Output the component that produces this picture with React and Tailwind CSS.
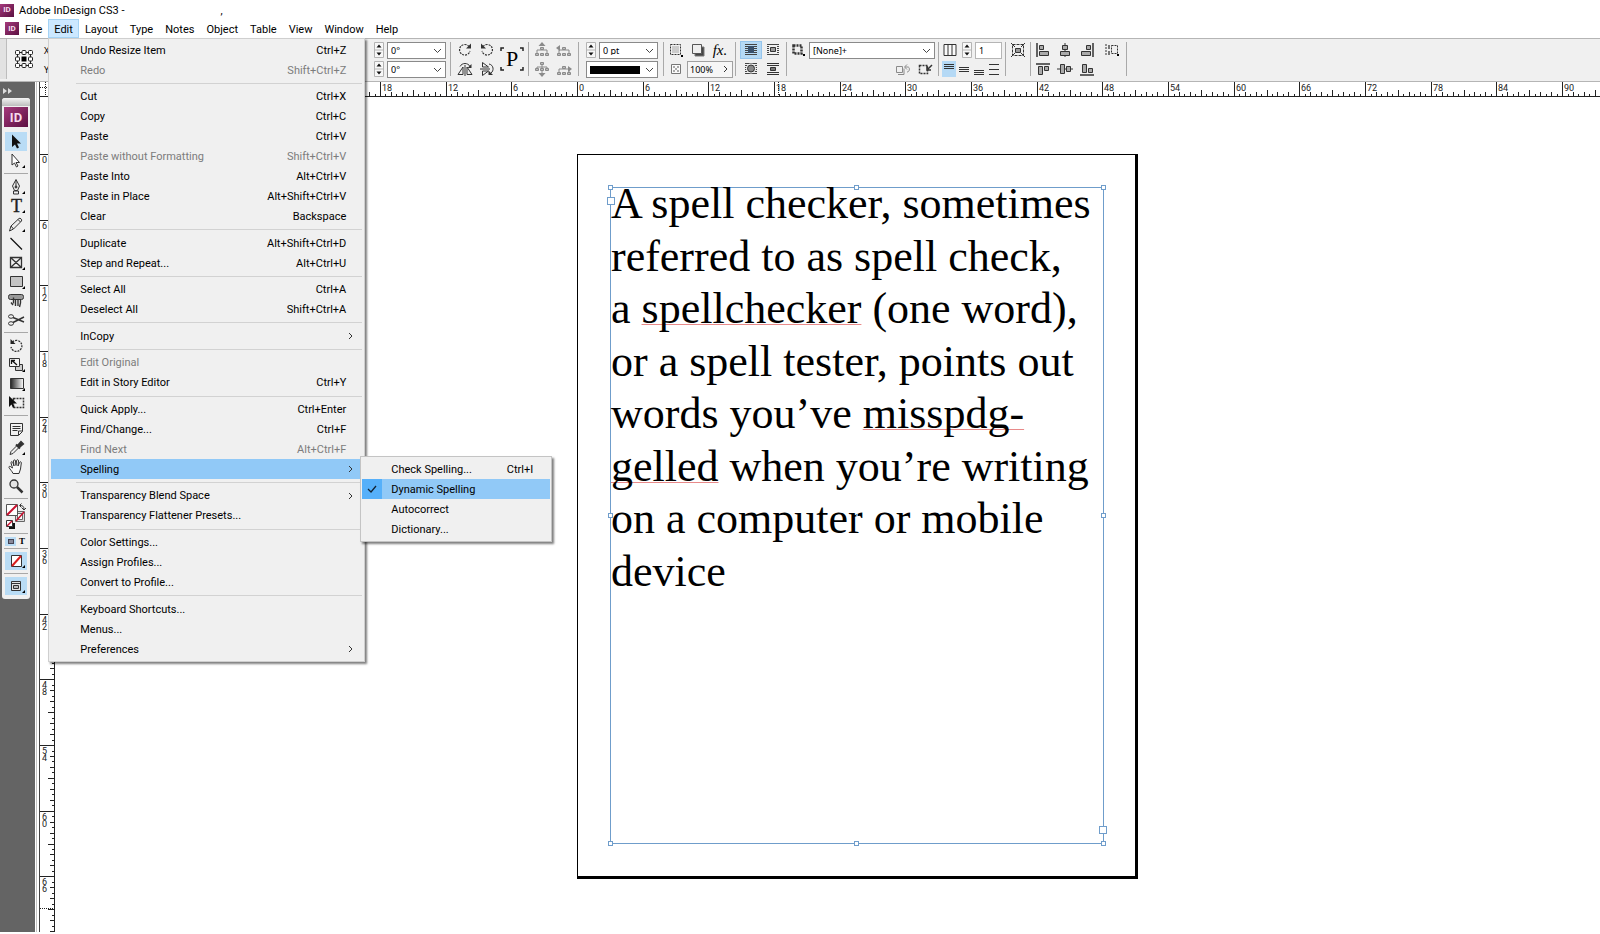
import React from "react";

const UNIT = 10.945; // one pica on the rulers at this zoom level

const MENUS = ["Layout", "Type", "Notes", "Object", "Table", "View", "Window", "Help"];

const EDIT_MENU = [
  [
    { label: "Undo Resize Item", keys: "Ctrl+Z" },
    { label: "Redo", keys: "Shift+Ctrl+Z", disabled: true },
  ],
  [
    { label: "Cut", keys: "Ctrl+X" },
    { label: "Copy", keys: "Ctrl+C" },
    { label: "Paste", keys: "Ctrl+V" },
    { label: "Paste without Formatting", keys: "Shift+Ctrl+V", disabled: true },
    { label: "Paste Into", keys: "Alt+Ctrl+V" },
    { label: "Paste in Place", keys: "Alt+Shift+Ctrl+V" },
    { label: "Clear", keys: "Backspace" },
  ],
  [
    { label: "Duplicate", keys: "Alt+Shift+Ctrl+D" },
    { label: "Step and Repeat...", keys: "Alt+Ctrl+U" },
  ],
  [
    { label: "Select All", keys: "Ctrl+A" },
    { label: "Deselect All", keys: "Shift+Ctrl+A" },
  ],
  [{ label: "InCopy", arrow: true }],
  [
    { label: "Edit Original", disabled: true },
    { label: "Edit in Story Editor", keys: "Ctrl+Y" },
  ],
  [
    { label: "Quick Apply...", keys: "Ctrl+Enter" },
    { label: "Find/Change...", keys: "Ctrl+F" },
    { label: "Find Next", keys: "Alt+Ctrl+F", disabled: true },
    { label: "Spelling", arrow: true, open: true },
  ],
  [
    { label: "Transparency Blend Space", arrow: true },
    { label: "Transparency Flattener Presets..." },
  ],
  [
    { label: "Color Settings..." },
    { label: "Assign Profiles..." },
    { label: "Convert to Profile..." },
  ],
  [
    { label: "Keyboard Shortcuts..." },
    { label: "Menus..." },
    { label: "Preferences", arrow: true },
  ],
];

const SPELLING_MENU = [
  { label: "Check Spelling...", keys: "Ctrl+I" },
  { label: "Dynamic Spelling", checked: true },
  { label: "Autocorrect" },
  { label: "Dictionary..." },
];

const Logo = ({ className }) => (
  <span
    className={`flex items-center justify-center bg-linear-to-br from-[#a53a7c] to-[#5c0f42] font-bold text-[#f6dcec] leading-none ${className}`}
  >
    ID
  </span>
);

const Svg = ({ w = 16, h = 16, children }) => (
  <svg
    width={w}
    height={h}
    viewBox={`0 0 ${w} ${h}`}
    fill="none"
    stroke="#333"
    className="shrink-0"
    aria-hidden="true"
  >
    {children}
  </svg>
);

/* ---------- menus ---------- */

const SubmenuArrow = () => (
  <svg width="6" height="8" viewBox="0 0 6 8" fill="none" stroke="#333" aria-hidden="true">
    <path d="M1 1l3 3-3 3" />
  </svg>
);

const SpellingMenu = () => (
  <div className="absolute left-[309px] -top-[3px] w-[192px] border border-[#c4c4c4] bg-[#f0f0f0] px-px py-[2px] shadow-[2px_2px_2px_rgba(0,0,0,0.5)] text-black">
    {SPELLING_MENU.map((item) => (
      <button
        key={item.label}
        type="button"
        className={`flex h-[20px] w-full items-center pr-[17px] ${item.checked ? "bg-[#91c9f7]" : ""}`}
      >
        <span
          className={`mr-[9px] flex h-full w-[20px] items-center justify-center ${item.checked ? "bg-[#56b0fa]" : ""}`}
        >
          {item.checked && (
            <svg width="10" height="8" viewBox="0 0 10 8" fill="none" stroke="#123" strokeWidth="1.3">
              <path d="M1 4l3 3 5-6" />
            </svg>
          )}
        </span>
        <span className="grow text-left">{item.label}</span>
        <span>{item.keys}</span>
      </button>
    ))}
  </div>
);

const EditMenu = () => (
  <div className="absolute left-0 top-full z-20 flex h-[624px] w-[317px] flex-col border border-[#cfcfcf] bg-[#f0f0f0] px-[2px] pt-px pb-[2px] shadow-[2px_2px_2px_rgba(0,0,0,0.5)]">
    {EDIT_MENU.map((group, i) => (
      <React.Fragment key={group[0].label}>
        {i > 0 && (
          <div className="flex grow items-center pl-[25px]">
            <div className="h-px w-full bg-[#d2d2d2]" />
          </div>
        )}
        {group.map((item) => (
          <div key={item.label} className="relative">
            <button
              type="button"
              disabled={item.disabled}
              className={`flex h-[20px] w-full items-center pl-[29px] ${item.arrow ? "pr-[8px]" : "pr-[16px]"} ${item.open ? "bg-[#91c9f7]" : ""} ${item.disabled ? "text-[#7c7c7c]" : "text-black"}`}
            >
              <span className="grow text-left">{item.label}</span>
              {item.arrow ? <SubmenuArrow /> : <span>{item.keys}</span>}
            </button>
            {item.open && <SpellingMenu />}
          </div>
        ))}
      </React.Fragment>
    ))}
  </div>
);

/* ---------- control bar ---------- */

const Divider = () => <div className="h-[34px] w-px shrink-0 bg-[#a9a9a9]" />;

const Group = ({ className, children }) => (
  <div className={`flex shrink-0 flex-col ${className}`}>{children}</div>
);

const Row = ({ className = "", children }) => (
  <div className={`flex h-[20px] items-center last:h-[18px] ${className}`}>{children}</div>
);

const IconButton = ({ label, active, children }) => (
  <button
    type="button"
    aria-label={label}
    className={`flex h-[18px] w-[22px] items-center justify-center ${active ? "bg-[#b5d9f5] outline outline-[#96c5ec] -outline-offset-1" : ""}`}
  >
    {children}
  </button>
);

const Spinner = () => (
  <svg width="10" height="16" viewBox="0 0 10 16" className="mr-[3px] shrink-0" aria-hidden="true">
    <path d="M.5.5h9v15h-9zM.5 8h9" fill="#f8f8f8" stroke="#b4b4b4" />
    <path d="M5 2.5l2.500 3h-5zM5 13.500l2.500-3h-5z" fill="#111" />
  </svg>
);

const Chevron = () => (
  <svg
    width="9"
    height="6"
    viewBox="0 0 9 6"
    fill="none"
    stroke="#444"
    className="pointer-events-none absolute right-[4px] top-[6px]"
    aria-hidden="true"
  >
    <path d="M1 1l3.500 3.500L8 1" />
  </svg>
);

const Select = ({ label, value, className }) => (
  <div className={`relative shrink-0 ${className}`}>
    <select
      aria-label={label}
      className="block h-[17px] w-full appearance-none border border-[#8a8a8a] bg-white pl-[3px] text-[9px] leading-none text-black"
    >
      <option>{value}</option>
    </select>
    <Chevron />
  </div>
);

const Tree = ({ d }) => (
  <Svg>
    <g stroke="#8a8a8a">
      <path d="M8 5v3M3 11V8h10v3" />
      <path d="M6.500 5.500h3v2h-3zM1.500 11.500h3v2h-3zM6.500 11.500h3v2h-3zM11.500 11.500h3v2h-3z" fill="#bbb" />
      <path d={d} fill="#8a8a8a" stroke="none" />
    </g>
  </Svg>
);

// same tree with its arrow pointing down, boxes above it
const TreeDown = () => (
  <Svg>
    <g stroke="#8a8a8a">
      <path d="M8 3v9M3 8V6h10v2" />
      <path d="M6.500 1.500h3v2h-3zM1.500 7.500h3v2h-3zM6.500 7.500h3v2h-3zM11.500 7.500h3v2h-3z" fill="#bbb" />
      <path d="M8 16l3.500-4h-7z" fill="#8a8a8a" stroke="none" />
    </g>
  </Svg>
);

const Lines = ({ ys }) => (
  <Svg w={14} h={14}>
    {ys.map((y) => (
      <path key={y} d={`M2 ${y}.5h10`} />
    ))}
  </Svg>
);

const WrapLines = ({ children }) => (
  <Svg>
    <path d="M2 2.500h12M2 4.500h12M2 6.500h12M2 8.500h12M2 10.500h12M2 12.500h12" stroke="#444" />
    {children}
  </Svg>
);

const ControlBar = () => (
  <div className="flex h-[44px] items-center overflow-hidden border-y border-[#b5b5b5] bg-[#f0f0f0] pb-[2px] font-['Noto_Sans',sans-serif] text-[9px] text-black">
    <div className="mr-[8px] h-full w-[7px] shrink-0 border-r border-[#bdbdbd] bg-[#e2e2e2]" />
    <Svg w={18} h={18}>
      <path d="M2.500 2.500h13v13h-13z" stroke="#222" />
      <g fill="#fff" stroke="#222">
        <rect x=".5" y=".5" width="4" height="4" rx="1" />
        <rect x="7" y=".5" width="4" height="4" rx="1" />
        <rect x="13.500" y=".5" width="4" height="4" rx="1" />
        <rect x=".5" y="7" width="4" height="4" rx="1" />
        <rect x="13.500" y="7" width="4" height="4" rx="1" />
        <rect x=".5" y="13.500" width="4" height="4" rx="1" />
        <rect x="7" y="13.500" width="4" height="4" rx="1" />
        <rect x="13.500" y="13.500" width="4" height="4" rx="1" />
      </g>
      <rect x="5.500" y="5.500" width="7" height="7" fill="#fff" stroke="none" />
      <rect x="6.500" y="6.500" width="5" height="5" fill="#000" stroke="none" />
    </Svg>
    <Group className="ml-[11px] w-[330px]">
      <Row>X:</Row>
      <Row>Y:</Row>
    </Group>

    <Group className="w-[76px]">
      <Row>
        <Spinner />
        <Select label="Rotation angle" value="0°" className="w-[59px]" />
      </Row>
      <Row>
        <Spinner />
        <Select label="Shear angle" value="0°" className="w-[59px]" />
      </Row>
    </Group>
    <Divider />
    <div className="flex w-[77px] shrink-0 items-center pl-[3px]">
      <Group>
        <Row>
          <IconButton label="Rotate 90 clockwise">
            <Svg>
              <path d="M12 4.500A5.300 5.300 0 1 0 13 9" strokeDasharray="2 1" strokeWidth="1.200" />
              <path d="M14 1.500v5H9z" fill="#333" stroke="none" />
            </Svg>
          </IconButton>
          <IconButton label="Rotate 90 counter-clockwise">
            <Svg>
              <path d="M4 4.500A5.300 5.300 0 1 1 3 9" strokeDasharray="2 1" strokeWidth="1.200" />
              <path d="M2 1.500v5h5z" fill="#333" stroke="none" />
            </Svg>
          </IconButton>
        </Row>
        <Row>
          <IconButton label="Flip horizontal">
            <Svg>
              <path d="M6 6v7.500H1zM10 6v7.500h5zM8 4v11M3 5.500c2-4 8-4 10 0" />
              <path d="M14.500 3v4h-4z" fill="#333" stroke="none" />
            </Svg>
          </IconButton>
          <IconButton label="Flip vertical">
            <Svg>
              <path d="M3.500 6h6l-6-4.500zM3.500 10h6l-6 4.500zM1 8h10M10 3c5 1 5 7 2 9" />
              <path d="M9.500 9.500V14H14z" fill="#333" stroke="none" />
            </Svg>
          </IconButton>
        </Row>
      </Group>
      <div className="relative ml-[2px] flex h-[24px] w-[24px] items-center justify-center font-['Liberation_Serif',serif] text-[22px] leading-none">
        P
        <svg width="24" height="24" viewBox="0 0 24 24" fill="none" stroke="#222" className="absolute inset-0" aria-hidden="true">
          <path d="M1 4V1h3M20 1h3v3M23 20v3h-3M4 23H1v-3" strokeWidth="1.500" />
        </svg>
      </div>
    </div>
    <Divider />
    <Group className="w-[49px] pl-[2px]">
      <Row>
        <IconButton label="Select container">
          <Tree d="M8 0l3.500 4h-7z" />
        </IconButton>
        <IconButton label="Select previous object">
          <Tree d="M0 6l4-3v6z" />
        </IconButton>
      </Row>
      <Row>
        <IconButton label="Select content">
          <TreeDown />
        </IconButton>
        <IconButton label="Select next object">
          <Tree d="M16 8l-4-3v6z" />
        </IconButton>
      </Row>
    </Group>
    <Divider />
    <Group className="w-[84px] pl-[7px]">
      <Row>
        <Spinner />
        <Select label="Stroke weight" value="0 pt" className="w-[59px]" />
      </Row>
      <Row>
        <div className="relative w-[72px]">
          <select
            aria-label="Stroke type"
            className="block h-[17px] w-full appearance-none border border-[#8a8a8a] bg-white"
          />
          <div className="pointer-events-none absolute left-[4px] top-[5px] h-[8px] w-[50px] bg-black" />
          <Chevron />
        </div>
      </Row>
    </Group>
    <Divider />
    <Group className="w-[71px] pl-px">
      <Row>
        <IconButton label="Corner options">
          <Svg>
            <path d="M2.500 2.500h10v10h-10z" strokeDasharray="2 1" />
            <path d="M4 4h7v7H4z" fill="#ccc" stroke="none" />
            <path d="M13 13h2v2h-2z" fill="#000" stroke="none" />
          </Svg>
        </IconButton>
        <IconButton label="Drop shadow">
          <Svg>
            <path d="M5 5h9v9H5z" fill="#444" stroke="#777" />
            <path d="M2.500 2.500h9v9h-9z" fill="#eee" stroke="#555" />
          </Svg>
        </IconButton>
        <IconButton label="Effects">
          <span className="font-['Liberation_Serif',serif] text-[15px] italic leading-none">fx.</span>
        </IconButton>
      </Row>
      <Row>
        <IconButton label="Opacity">
          <Svg w={12} h={12}>
            <path d="M1.500 1.500h9v9h-9z" stroke="#777" fill="#fafafa" />
            <path d="M3 3h2v2H3zM7 3h2v2H7zM5 5h2v2H5zM3 7h2v2H3zM7 7h2v2H7z" fill="#aaa" stroke="none" />
          </Svg>
        </IconButton>
        <div className="flex h-[17px] w-[46px] items-center border border-[#a0a0a0] bg-[#f6f6f6]">
          <input
            aria-label="Opacity"
            defaultValue="100%"
            className="h-full w-[35px] bg-[#f6f6f6] pl-[2px] text-[9px]"
          />
          <SubmenuArrow />
        </div>
      </Row>
    </Group>
    <Divider />
    <Group className="w-[50px] pl-[4px]">
      <Row>
        <IconButton label="No text wrap" active>
          <WrapLines>
            <path d="M5 4h6v7H5z" fill="#39506b" stroke="none" />
          </WrapLines>
        </IconButton>
        <IconButton label="Wrap around bounding box">
          <WrapLines>
            <path d="M4 4h8v7H4z" fill="#f0f0f0" stroke="none" />
            <path d="M5.500 5.500h5v4h-5z" fill="#999" />
          </WrapLines>
        </IconButton>
      </Row>
      <Row>
        <IconButton label="Wrap around object shape">
          <WrapLines>
            <circle cx="8" cy="7.500" r="5" fill="#f0f0f0" stroke="none" />
            <circle cx="8" cy="7.500" r="3.500" fill="#888" />
          </WrapLines>
        </IconButton>
        <IconButton label="Jump object">
          <Svg>
            <path d="M2 2.500h12M2 4.500h12M2 11.500h12M2 13.500h12" />
            <path d="M5.500 6.500h5v3h-5z" fill="#777" />
          </Svg>
        </IconButton>
      </Row>
    </Group>
    <Divider />
    <Group className="w-[151px]">
      <Row>
        <IconButton label="Object style">
          <Svg>
            <path d="M3.500 3.500h8v8h-8z" strokeDasharray="2 1" strokeWidth="2.500" />
            <path d="M13 12h2v2h-2z" fill="#000" stroke="none" />
          </Svg>
        </IconButton>
        <Select label="Object style" value="[None]+" className="w-[126px]" />
      </Row>
      <Row className="justify-end pr-[2px]">
        <IconButton label="Clear attributes">
          <Svg>
            <g stroke="#8a8a8a">
              <path d="M1.500 5.500h6v6h-6z" />
              <path d="M3 13.500h6v-6M10 6h3c2 0 2 5-1 5M12 3.500L9.500 6l2.500 2.500" />
            </g>
          </Svg>
        </IconButton>
        <IconButton label="Clear overrides">
          <Svg>
            <path d="M2.500 4.500h8v8h-8z" strokeDasharray="2 1" strokeWidth="1.500" />
            <path d="M15 4l-4 4M10 5v4h4" strokeWidth="1.500" />
          </Svg>
        </IconButton>
      </Row>
    </Group>
    <Divider />
    <Group className="w-[66px] pl-[3px]">
      <Row>
        <Svg>
          <path d="M2 2.500h12v11H2zM6 2.500v11M10 2.500v11" fill="#fafafa" />
        </Svg>
        <span className="w-[4px]" />
        <Spinner />
        <input
          aria-label="Columns"
          defaultValue="1"
          className="h-[17px] w-[27px] border border-[#b5b5b5] bg-white pl-[3px] text-[9px]"
        />
      </Row>
      <Row className="gap-px">
        <button type="button" aria-label="Align top" className="bg-[#b5d9f5] py-px">
          <Lines ys={[2, 4, 6]} />
        </button>
        <button type="button" aria-label="Align center">
          <Lines ys={[5, 7, 9]} />
        </button>
        <button type="button" aria-label="Align bottom">
          <Lines ys={[8, 10, 12]} />
        </button>
        <button type="button" aria-label="Justify vertically">
          <Lines ys={[2, 7, 12]} />
        </button>
      </Row>
    </Group>
    <Divider />
    <Group className="w-[24px] pl-px">
      <Row>
        <IconButton label="Fit content">
          <Svg>
            <path d="M2.500 2.500h11v11h-11z" strokeDasharray="3 1" />
            <path d="M1 1l4 4M15 1l-4 4M1 15l4-4M15 15l-4-4" />
            <path d="M5.500 6.500h5v4h-5z" fill="#999" />
          </Svg>
        </IconButton>
      </Row>
      <Row />
    </Group>
    <Divider />
    <Group className="w-[95px] pl-px">
      <Row>
        <IconButton label="Align left edges">
          <Svg>
            <path d="M2 1v14" strokeWidth="1.500" />
            <path d="M4.500 3.500h4v4h-4zM4.500 9.500h9v4h-9z" fill="#aaa" />
          </Svg>
        </IconButton>
        <IconButton label="Align horizontal centers">
          <Svg>
            <path d="M8 1v14" />
            <path d="M5.500 3.500h5v4h-5zM3.500 9.500h9v4h-9z" fill="#aaa" />
          </Svg>
        </IconButton>
        <IconButton label="Align right edges">
          <Svg>
            <path d="M14 1v14" strokeWidth="1.500" />
            <path d="M7.500 3.500h4v4h-4zM2.500 9.500h9v4h-9z" fill="#aaa" />
          </Svg>
        </IconButton>
        <span className="w-[3px]" />
        <IconButton label="Align to">
          <Svg>
            <path d="M2 2v12M7.500 3.500h6v8h-6z" strokeDasharray="2 1" />
            <path d="M4 3h2v4H4zM4 9h2v4H4z" fill="#777" stroke="none" />
            <path d="M13 12h2v2h-2z" fill="#000" stroke="none" />
          </Svg>
        </IconButton>
      </Row>
      <Row>
        <IconButton label="Align top edges">
          <Svg>
            <path d="M1 3h14" strokeWidth="1.500" />
            <path d="M3.500 5.500h4v8h-4zM9.500 5.500h4v4h-4z" fill="#aaa" />
          </Svg>
        </IconButton>
        <IconButton label="Align vertical centers">
          <Svg>
            <path d="M0 8h16" />
            <path d="M3.500 3.500h4v9h-4zM9.500 5.500h4v5h-4z" fill="#aaa" />
          </Svg>
        </IconButton>
        <IconButton label="Align bottom edges">
          <Svg>
            <path d="M1 14h14" strokeWidth="1.500" />
            <path d="M3.500 3.500h4v8h-4zM9.500 7.500h4v4h-4z" fill="#aaa" />
          </Svg>
        </IconButton>
      </Row>
    </Group>
    <Divider />
  </div>
);

/* ---------- tools panel ---------- */

const Corner = () => <path d="M18 13v3h-3z" fill="#000" stroke="none" />;

const TOOLS = [
  [
    {
      label: "Selection",
      active: true,
      icon: <path d="M5 1.500v12.500l3-2.500 2 4 2-1-2-4h4z" fill="#111" stroke="none" />,
    },
    {
      label: "Direct Selection",
      icon: (
        <>
          <path d="M5 2v11l2.500-2 2 4 1.500-1-2-3.500h3.500z" fill="#fff" />
          <Corner />
        </>
      ),
    },
  ],
  [
    {
      label: "Pen",
      icon: (
        <>
          <path d="M9 1.500L5.500 8l2 4.500h3l2-4.500zM9 2v6M6.500 13h5v3h-5z" fill="#eee" />
          <circle cx="9" cy="9" r="1" fill="#333" />
          <Corner />
        </>
      ),
    },
    {
      label: "Type",
      icon: (
        <>
          <text x="4" y="15" fontSize="18" fontFamily="Liberation Serif, serif" fill="#222" stroke="#222" strokeWidth=".4">
            T
          </text>
          <Corner />
        </>
      ),
    },
    {
      label: "Pencil",
      icon: (
        <>
          <path d="M2.500 15l1.500-5 8-7.500c1-1 3.500 1 2.500 2.500L6.500 13zM4 10l2.500 3M11 3.500l2.500 2.500" fill="#eee" />
          <Corner />
        </>
      ),
    },
    { label: "Line", icon: <path d="M3.500 3L15 14.500" stroke="#111" strokeWidth="1.300" /> },
    {
      label: "Rectangle Frame",
      icon: (
        <>
          <path d="M3.500 3.500h11v10h-11zM3.500 3.500l11 10M14.500 3.500l-11 10" strokeWidth="1.300" />
          <Corner />
        </>
      ),
    },
    {
      label: "Rectangle",
      icon: (
        <>
          <path d="M3.500 3.500h12v10h-12z" fill="#c4c4c4" />
          <Corner />
        </>
      ),
    },
    {
      label: "Button",
      icon: (
        <>
          <rect x="1.500" y="2.500" width="15" height="5" rx="2" fill="#999" />
          <path d="M6 13L4 10.500M6.500 5.500v6M8.500 8v6M11 8v6M13.500 8v3l-1 4" strokeWidth="1.400" />
        </>
      ),
    },
    {
      label: "Scissors",
      icon: (
        <>
          <path d="M6 6.500l11 4.500M6 11.500L17 6" strokeWidth="1.400" />
          <ellipse cx="4" cy="5.500" rx="2.500" ry="1.800" />
          <ellipse cx="4" cy="12.500" rx="2.500" ry="1.800" />
        </>
      ),
    },
  ],
  [
    {
      label: "Rotate",
      icon: (
        <>
          <path d="M5.500 5A5.500 5.500 0 1 1 4 10" strokeDasharray="2 1" strokeWidth="1.300" />
          <path d="M3.500 2v5h5z" fill="#222" stroke="none" />
        </>
      ),
    },
    {
      label: "Scale",
      icon: (
        <>
          <path d="M8.500 8.500h7v6h-7z" fill="#ccc" />
          <path d="M2.500 2.500h10v8h-10z" fill="#f4f4f4" />
          <path d="M10 9L5 4.500M4.500 8V4.500H8" stroke="#111" strokeWidth="1.300" />
          <Corner />
        </>
      ),
    },
    {
      label: "Gradient",
      icon: (
        <>
          <defs>
            <linearGradient id="grad">
              <stop stopColor="#222" />
              <stop offset="1" stopColor="#fff" />
            </linearGradient>
          </defs>
          <path d="M3.500 3.500h13v10h-13z" fill="url(#grad)" />
          <Corner />
        </>
      ),
    },
    {
      label: "Free Transform",
      icon: (
        <>
          <path d="M6.500 4.500h10v9h-10z" strokeDasharray="2 1" strokeWidth="1.500" />
          <path d="M2 2v11l2.500-2.500L6 14l1.500-1L6 9.500h4z" fill="#111" stroke="none" />
        </>
      ),
    },
  ],
  [
    {
      label: "Note",
      icon: (
        <>
          <path d="M3.500 3.500h12v8l-4 4h-8z" fill="#f2f2f2" />
          <path d="M5.500 6.500h8M5.500 8.500h8M5.500 10.500h5M11.500 15v-4h4" />
        </>
      ),
    },
    {
      label: "Eyedropper",
      icon: (
        <>
          <path d="M3 15.500l1-3L10 6.500l2 2-6 6z" fill="#eee" />
          <path d="M9 5.500l4 4M11 6.500l3-3.500 2 2-3.500 3z" fill="#222" strokeWidth="2" />
          <Corner />
        </>
      ),
    },
    {
      label: "Hand",
      icon: (
        <path
          d="M6 15.500C5 13 3 11.500 2 9.500c-.5-1.500 1.500-1.500 2.500 0L5.500 10 4 5c-.3-1.500 1.500-2 2 0l1 3-.5-5c0-1.500 2-1.500 2 0l.5 4.500.5-5c.5-1.300 2-1 2 .5l-.5 5 1.500-3.500c.5-1.200 2-.8 1.800.5L13.500 11l-1.500 4.500z"
          fill="#fafafa"
        />
      ),
    },
    {
      label: "Zoom",
      icon: (
        <>
          <circle cx="7" cy="7" r="4" fill="#e4e4e4" strokeWidth="1.300" />
          <path d="M10 10l5.500 5.500" strokeWidth="2.500" />
        </>
      ),
    },
  ],
];

const PanelLine = () => (
  <div className="flex h-[7px] w-full items-center px-[2px]">
    <div className="h-px w-full bg-[#a8a8a8]" />
  </div>
);

const ToolsPanel = () => (
  <aside className="w-[35px] shrink-0 bg-[#646464]">
    <div className="flex h-[16px] items-center pl-[3px] pt-[2px]">
      <svg width="9" height="6" viewBox="0 0 9 6" fill="#ddd" aria-hidden="true">
        <path d="M0 0l4 3-4 3zM5 0l4 3-4 3z" />
      </svg>
    </div>
    <div className="ml-[2px] flex w-[28px] flex-col items-center rounded-[3px] bg-[#f0f0f0] pb-[4px]">
      <div className="mb-px h-[8px] w-full rounded-t-[3px] bg-linear-to-b from-[#f4f4f4] to-[#bdbdbd]" />
      <Logo className="mb-[5px] h-[20px] w-[24px] text-[13px]" />
      {TOOLS.map((group, i) => (
        <React.Fragment key={i}>
          {i > 0 && <PanelLine />}
          {group.map((tool) => (
            <button
              key={tool.label}
              type="button"
              aria-label={tool.label}
              className={`flex h-[19px] w-[22px] items-center justify-center ${tool.active ? "bg-[#b9dcf5]" : ""}`}
            >
              <Svg w={18} h={18}>
                {tool.icon}
              </Svg>
            </button>
          ))}
        </React.Fragment>
      ))}
      <PanelLine />
      <Svg w={24} h={28}>
        <path d="M11.500 9.500h9v10h-9z" fill="#ddd" stroke="#666" />
        <path d="M13.500 11.500h5v6h-5z" fill="#fff" stroke="#666" />
        <path d="M12 19l8-9" stroke="#c8102e" strokeWidth="1.600" />
        <path d="M2.500 2.500h11v11h-11z" fill="#fff" stroke="#555" />
        <path d="M3 13L13 3" stroke="#c8102e" strokeWidth="2" />
        <path d="M16 3.500c3 0 4 1 4 4M17.500 1.500l-2 2 2 2M18 6l2 2 2-2" />
        <path d="M5 21h6v6H5z" fill="#111" stroke="none" />
        <path d="M2.500 18.500h6v6h-6z" fill="#fff" />
        <path d="M3 24l5-5" stroke="#c8102e" strokeWidth="1.500" />
      </Svg>
      <PanelLine />
      <div className="flex h-[8px] w-[22px] items-center justify-between">
        <span className="flex h-[9px] w-[11px] items-center justify-center bg-[#b9dcf5]">
          <span className="h-[5px] w-[6px] border border-[#445] bg-[#889]" />
        </span>
        <span className="w-[10px] text-center font-['Liberation_Serif',serif] text-[9px] font-bold leading-none">T</span>
      </div>
      <PanelLine />
      <button type="button" aria-label="Apply none" className="flex h-[18px] w-[22px] items-center justify-center bg-[#b9dcf5]">
        <Svg w={18} h={18}>
          <path d="M4.500 3.500h10v11h-10z" fill="#fff" />
          <path d="M5 14l9-10" stroke="#d81e1e" strokeWidth="2" />
          <Corner />
        </Svg>
      </button>
      <PanelLine />
      <button type="button" aria-label="View mode" className="flex h-[18px] w-[22px] items-center justify-center bg-[#b9dcf5]">
        <Svg w={18} h={18}>
          <path d="M4.500 4.500h9v9h-9zM4.500 6.500h9" fill="#e4e4e4" />
          <path d="M6.500 8.500h5v3h-5z" fill="#bbb" />
          <Corner />
        </Svg>
      </button>
    </div>
  </aside>
);

/* ---------- rulers ---------- */

// half picas between two ruler positions; every 12th carries a label
const ticks = (from, to) => Array.from({ length: to - from }, (_, i) => from + i);

const tickLength = (n) => {
  if (n % 12 === 0) return 14;
  if (n % 6 === 0) return 6;
  return n % 2 === 0 ? 4 : 2;
};

const HorizontalRuler = () => (
  <svg className="h-[15px] min-w-0 grow bg-white" aria-hidden="true">
    {ticks(-42, 187).map((n) => {
      const x = Math.round(522 + (n * UNIT) / 2);
      return (
        <g key={n}>
          <rect x={x} y={14 - tickLength(n)} width="1" height={tickLength(n)} fill="#222" />
          {n % 12 === 0 && (
            <text x={x + 2} y="9" fontSize="9" fill="#222">
              {Math.abs(n / 2)}
            </text>
          )}
        </g>
      );
    })}
    <path d="M723.500 0v14" stroke="#222" strokeDasharray="1 1" />
    <rect y="14" width="100%" height="1" fill="#222" />
  </svg>
);

const VerticalRuler = () => (
  <svg className="h-full w-[15px] shrink-0 bg-white" aria-hidden="true">
    {ticks(-10, 143).map((n) => {
      const y = Math.round(57 + (n * UNIT) / 2);
      return (
        <g key={n}>
          <rect x={14 - tickLength(n)} y={y} width={tickLength(n)} height="1" fill="#222" />
          {n % 12 === 0 && (
            <text y={y + 9} fontSize="9" fill="#222">
              {String(n / 2)
                .split("")
                .map((digit, i) => (
                  <tspan key={i} x="2" dy={i * 7}>
                    {digit}
                  </tspan>
                ))}
            </text>
          )}
        </g>
      );
    })}
    <path d="M0 811.500h14" stroke="#222" strokeDasharray="1 1" />
    <rect x="14" width="1" height="100%" fill="#222" />
  </svg>
);

/* ---------- document ---------- */

const Misspelled = ({ children }) => (
  <span className="underline decoration-[#e88a8a] decoration-1 underline-offset-[1px] [text-decoration-skip-ink:none]">
    {children}
  </span>
);

const Handle = ({ className }) => (
  <span className={`absolute size-[5px] border border-[#6f9dcb] bg-white ${className}`} />
);

const Port = ({ className }) => (
  <span className={`absolute size-[8px] border border-[#6f9dcb] bg-white ${className}`} />
);

const Page = () => (
  <div className="absolute left-[522px] top-[57px] h-[725px] w-[561px] border border-r-3 border-b-3 border-black bg-white">
    <div className="absolute left-[32px] top-[32px] h-[657px] w-[494px] border border-[#6f9dcb]">
      <div className="-mt-[10px] grid h-[420px] auto-rows-fr items-center whitespace-nowrap font-['Liberation_Serif',serif] text-[44px] leading-none text-black">
        <p>A spell checker, sometimes</p>
        <p>referred to as spell check,</p>
        <p>
          a <Misspelled>spellchecker</Misspelled> (one word),
        </p>
        <p>or a spell tester, points out</p>
        <p>
          words you’ve <Misspelled>misspdg-</Misspelled>
        </p>
        <p>
          <Misspelled>gelled</Misspelled> when you’re writing
        </p>
        <p>on a computer or mobile</p>
        <p>device</p>
      </div>
      <Handle className="-left-[3px] -top-[3px]" />
      <Handle className="left-[243px] -top-[3px]" />
      <Handle className="-right-[3px] -top-[3px]" />
      <Handle className="-left-[3px] top-[325px]" />
      <Handle className="-right-[3px] top-[325px]" />
      <Handle className="-left-[3px] -bottom-[3px]" />
      <Handle className="left-[243px] -bottom-[3px]" />
      <Handle className="-right-[3px] -bottom-[3px]" />
      <Port className="-left-[4px] top-[9px]" />
      <Port className="-right-[4px] bottom-[9px]" />
      <span className="absolute left-[245px] top-[326px] size-[2px] bg-[#6f9dcb]" />
    </div>
  </div>
);

export default function App() {
  return (
    <div className="flex h-screen flex-col bg-white pb-[2px] font-['Roboto',sans-serif] text-[11px] leading-none text-black">
      <header className="flex h-[19px] shrink-0 items-center pt-px">
        <Logo className="mr-[5px] h-[13px] w-[14px] text-[8px]" />
        <h1>Adobe InDesign CS3 -</h1>
        <span className="ml-[96px]">,</span>
      </header>

      <nav className="flex h-[19px] shrink-0 items-center pl-[5px]">
        <Logo className="h-[13px] w-[14px] text-[8px]" />
        <button type="button" className="h-full px-[6px] pt-[2px]">
          File
        </button>
        <div className="relative h-full">
          <button
            type="button"
            className="h-full border border-[#a5d3f5] bg-[#cce8ff] px-[5px] pt-[2px]"
          >
            Edit
          </button>
          <EditMenu />
        </div>
        {MENUS.map((name) => (
          <button key={name} type="button" className="h-full px-[6px] pt-[2px]">
            {name}
          </button>
        ))}
      </nav>

      <div className="shrink-0">
        <ControlBar />
      </div>

      <div className="flex min-h-0 grow">
        <ToolsPanel />
        <div className="w-[5px] shrink-0 border-r border-[#444] bg-white">
          <div className="ml-px h-full w-px bg-[#c4c4c4]" />
        </div>
        <main className="flex min-w-0 grow flex-col">
          <div className="flex h-[15px] shrink-0">
            <svg width="15" height="15" viewBox="0 0 15 15" fill="none" stroke="#222" aria-hidden="true">
              <path d="M5.500 0v14M0 5.500h15" strokeDasharray="1 1" />
              <path d="M0 14.500h15" />
            </svg>
            <HorizontalRuler />
          </div>
          <div className="flex min-h-0 grow">
            <VerticalRuler />
            <div className="relative min-w-0 grow overflow-hidden bg-white">
              <Page />
            </div>
          </div>
        </main>
      </div>
    </div>
  );
}
